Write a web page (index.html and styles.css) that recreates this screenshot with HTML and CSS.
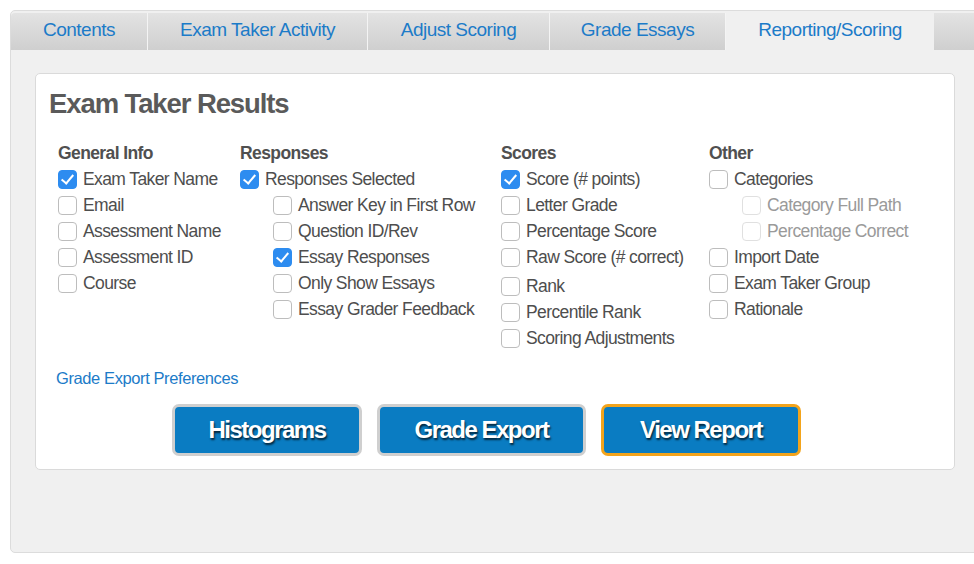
FILE: index.html
```html
<!DOCTYPE html>
<html>
<head>
<meta charset="utf-8">
<link rel="stylesheet" href="styles.css">
</head>
<body>
<div class="frame">
  <div class="tabs">
    <div class="tab t1">Contents</div>
    <div class="tab t2">Exam Taker Activity</div>
    <div class="tab t3">Adjust Scoring</div>
    <div class="tab t4">Grade Essays</div>
    <div class="tab active t5">Reporting/Scoring</div>
    <div class="tab-rest"></div>
  </div>
  <div class="body">
    <div class="panel">
      <h1 class="title">Exam Taker Results</h1>
      <div class="cols">
        <div class="col">
          <div class="head">General Info</div>
          <label class="opt"><span class="cb on"></span>Exam Taker Name</label>
          <label class="opt"><span class="cb"></span>Email</label>
          <label class="opt"><span class="cb"></span>Assessment Name</label>
          <label class="opt"><span class="cb"></span>Assessment ID</label>
          <label class="opt"><span class="cb"></span>Course</label>
        </div>
        <div class="col">
          <div class="head">Responses</div>
          <label class="opt"><span class="cb on"></span>Responses Selected</label>
          <label class="opt sub"><span class="cb"></span>Answer Key in First Row</label>
          <label class="opt sub"><span class="cb"></span>Question ID/Rev</label>
          <label class="opt sub"><span class="cb on"></span>Essay Responses</label>
          <label class="opt sub"><span class="cb"></span>Only Show Essays</label>
          <label class="opt sub"><span class="cb"></span>Essay Grader Feedback</label>
        </div>
        <div class="col">
          <div class="head">Scores</div>
          <label class="opt"><span class="cb on"></span>Score (# points)</label>
          <label class="opt"><span class="cb"></span>Letter Grade</label>
          <label class="opt"><span class="cb"></span>Percentage Score</label>
          <label class="opt"><span class="cb"></span>Raw Score (# correct)</label>
          <label class="opt gap"><span class="cb"></span>Rank</label>
          <label class="opt"><span class="cb"></span>Percentile Rank</label>
          <label class="opt"><span class="cb"></span>Scoring Adjustments</label>
        </div>
        <div class="col">
          <div class="head">Other</div>
          <label class="opt"><span class="cb"></span>Categories</label>
          <label class="opt sub dis"><span class="cb"></span>Category Full Path</label>
          <label class="opt sub dis"><span class="cb"></span>Percentage Correct</label>
          <label class="opt"><span class="cb"></span>Import Date</label>
          <label class="opt"><span class="cb"></span>Exam Taker Group</label>
          <label class="opt"><span class="cb"></span>Rationale</label>
        </div>
      </div>
      <a class="pref">Grade Export Preferences</a>
      <div class="buttons">
        <button class="btn b1">Histograms</button>
        <button class="btn b2">Grade Export</button>
        <button class="btn b3 focus">View Report</button>
      </div>
    </div>
  </div>
</div>
</body>
</html>
```

FILE: styles.css
```css
html, body {
  margin: 0;
  padding: 0;
  background: #ffffff;
  overflow: hidden;
}
body {
  font-family: "Liberation Sans", Arial, sans-serif;
  width: 974px;
  height: 564px;
}
.frame {
  margin: 10px -20px 0 10px;
  height: 543px;
  background: #f0f0f0;
  border: 1px solid #dcdcdc;
  border-radius: 5px 0 0 5px;
  box-sizing: border-box;
  padding-top: 2px;
}
.tabs {
  display: flex;
  height: 37px;
}
.tab {
  background: linear-gradient(#e3e3e3, #cfcfcf);
  color: #1c7bc8;
  font-size: 19px;
  letter-spacing: -0.5px;
  line-height: 34px;
  padding-bottom: 3px;
  text-align: center;
  border-right: 1px solid #f4f4f4;
  box-sizing: border-box;
}
.t1 { width: 137px; border-top-left-radius: 4px; }
.t2 { width: 220px; }
.t3 { width: 182px; }
.t4 { width: 176px; }
.t5 { width: 208px; }
.tab.active {
  background: #f0f0f0;
  border-right: none;
  border-radius: 4px 4px 0 0;
}
.tab-rest {
  flex: 1;
  background: linear-gradient(#e3e3e3, #cfcfcf);
}
.body {
  padding: 23px 0 0 24px;
}
.panel {
  width: 920px;
  height: 397px;
  box-sizing: border-box;
  background: #ffffff;
  border: 1px solid #dadada;
  border-radius: 5px;
  padding: 13px 0 0 13px;
}
.title {
  margin: 0;
  font-size: 27.5px;
  letter-spacing: -1.1px;
  line-height: 34px;
  font-weight: bold;
  color: #5a5a5a;
}
.cols {
  display: grid;
  grid-template-columns: 182px 261px 208px 1fr;
  margin: 19px 0 0 9px;
}
.col {
  display: flex;
  flex-direction: column;
}
.head {
  font-size: 17.5px;
  letter-spacing: -0.6px;
  font-weight: bold;
  color: #505050;
  line-height: 26px;
}
.opt {
  display: flex;
  align-items: center;
  height: 26px;
  font-size: 17.5px;
  letter-spacing: -0.6px;
  color: #4e4e4e;
  white-space: nowrap;
}
.opt.sub { padding-left: 33px; }
.opt.gap { margin-top: 3px; }
.opt.dis { color: #9a9a9a; }
.cb {
  width: 17px;
  height: 17px;
  border: 1px solid #bdbdbd;
  border-radius: 4px;
  margin-right: 6px;
  background: #fff;
  flex: none;
  position: relative;
}
.opt.dis .cb { border-color: #e0e0e0; }
.cb.on {
  background: #2d8cf0;
  border-color: #2d8cf0;
}
.cb.on::after {
  content: "";
  position: absolute;
  left: 5px;
  top: 1px;
  width: 5px;
  height: 10px;
  border: solid #fff;
  border-width: 0 2px 2px 0;
  transform: rotate(40deg);
}
.pref {
  display: block;
  margin: 15px 0 0 7px;
  color: #1c7bc8;
  font-size: 16.5px;
  letter-spacing: -0.4px;
  line-height: 24px;
}
.buttons {
  display: flex;
  justify-content: center;
  gap: 15px;
  margin-top: 14px;
  padding-right: 30px;
}
.btn {
  height: 52px;
  border: 3px solid #cfcfcf;
  border-radius: 7px;
  background: #0a7cc2;
  color: #fff;
  font-family: "Liberation Sans", Arial, sans-serif;
  font-size: 24px;
  letter-spacing: -1.5px;
  font-weight: bold;
  text-shadow: 1px 2px 2px rgba(0,0,0,0.7);
  padding: 0;
}
.b1 { width: 190px; }
.b2 { width: 209px; }
.b3 { width: 200px; }
.btn.focus { border-color: #f3a41c; }
```
